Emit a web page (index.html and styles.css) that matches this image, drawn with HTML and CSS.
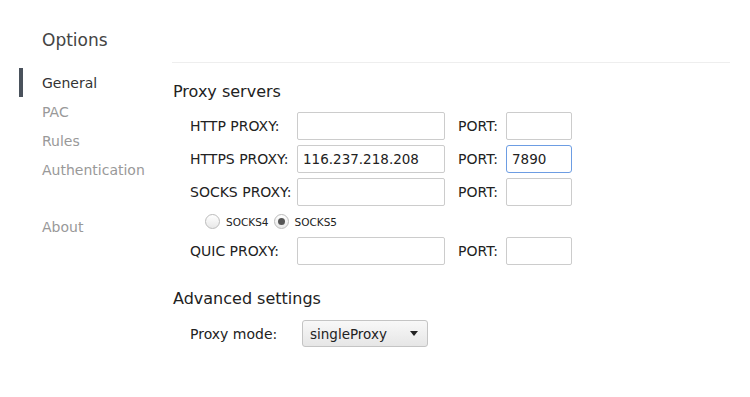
FILE: index.html
```html
<!DOCTYPE html>
<html lang="en">
<head>
  <meta charset="UTF-8" />
  <title>Options</title>
  <link rel="stylesheet" href="styles.css">
</head>
<body>
  <div class="sidebar">
    <h1 class="title">Options</h1>
    <ul class="nav">
      <li class="active">General</li>
      <li>PAC</li>
      <li>Rules</li>
      <li>Authentication</li>
      <li class="about">About</li>
    </ul>
  </div>

  <div class="main">
    <div class="header"></div>

    <h2 class="section-title">Proxy servers</h2>
    <div class="proxy-grid">
      <label>HTTP PROXY:</label>
      <input type="text" class="host">
      <label>PORT:</label>
      <input type="text" class="port">

      <label>HTTPS PROXY:</label>
      <input type="text" class="host" value="116.237.218.208">
      <label>PORT:</label>
      <input type="text" class="port focused" value="7890">

      <label>SOCKS PROXY:</label>
      <input type="text" class="host">
      <label>PORT:</label>
      <input type="text" class="port">

      <div class="socks-type">
        <span class="radio"></span><span class="radio-label">socks4</span>
        <span class="radio checked"></span><span class="radio-label">socks5</span>
      </div>

      <label>QUIC PROXY:</label>
      <input type="text" class="host">
      <label>PORT:</label>
      <input type="text" class="port">
    </div>

    <h2 class="section-title advanced">Advanced settings</h2>
    <div class="mode-row">
      <label>Proxy mode:</label>
      <div class="select">
        <span>singleProxy</span>
        <span class="arrow"></span>
      </div>
    </div>
  </div>
</body>
</html>
```

FILE: styles.css
```css
html, body {
  margin: 0;
  padding: 0;
  background-color: white;
  color: #222;
  font-family: "DejaVu Sans", sans-serif;
}

body {
  display: flex;
}

.sidebar {
  width: 172px;
  flex: 0 0 auto;
}

.title {
  margin: 28px 0 0 42px;
  font-size: 17px;
  font-weight: normal;
  color: #444;
  line-height: 24px;
}

.nav {
  list-style: none;
  margin: 16px 0 0 0;
  padding: 0;
}

.nav li {
  margin-left: 19px;
  padding-left: 19px;
  border-left: 4px solid transparent;
  height: 29px;
  line-height: 30px;
  font-size: 14px;
  color: #999;
}

.nav li.active {
  border-left-color: #4a525c;
  color: #333;
}

.nav li.about {
  margin-top: 28px;
}

.main {
  flex: 1;
  margin-right: 20px;
}

.header {
  height: 62px;
  border-bottom: 1px solid #eee;
}

.section-title {
  margin: 17px 0 0 1px;
  font-size: 16px;
  font-weight: normal;
  color: #222;
  line-height: 24px;
}

.proxy-grid {
  display: grid;
  grid-template-columns: 107px 148px 61px 66px;
  row-gap: 5px;
  align-items: center;
  margin: 8px 0 0 18px;
}

.proxy-grid label {
  font-size: 14px;
  color: #222;
}

.proxy-grid label:nth-of-type(even) {
  padding-left: 13px;
}

input {
  box-sizing: border-box;
  height: 28px;
  padding: 0 5px;
  border: 1px solid #ccc;
  border-radius: 2px;
  font-family: "DejaVu Sans", sans-serif;
  font-size: 13.5px;
  color: #222;
  outline: none;
}

input.host {
  width: 148px;
}

input.port {
  width: 66px;
}

input.focused {
  border-color: #6d9de3;
  border-radius: 3px;
}

.socks-type {
  grid-column: 1 / -1;
  display: flex;
  align-items: center;
  height: 21px;
  padding-left: 15px;
}

.radio {
  box-sizing: border-box;
  width: 15px;
  height: 15px;
  border-radius: 50%;
  border: 1px solid #bbb;
  background: linear-gradient(#fff, #e8e8e8);
  margin-right: 6px;
  position: relative;
}

.radio.checked::after {
  content: "";
  position: absolute;
  left: 3px;
  top: 3px;
  width: 7px;
  height: 7px;
  border-radius: 50%;
  background-color: #555;
}

.radio-label {
  font-size: 10.5px;
  text-transform: uppercase;
  margin-right: 5px;
}

.advanced {
  margin-top: 22px;
}

.mode-row {
  display: flex;
  align-items: center;
  margin: 9px 0 0 18px;
  font-size: 14px;
}

.mode-row label {
  width: 112px;
}

.select {
  box-sizing: border-box;
  width: 126px;
  height: 27px;
  border: 1px solid #c4c4c4;
  border-radius: 3px;
  background: linear-gradient(#f8f8f8, #e6e6e6);
  display: flex;
  align-items: center;
  justify-content: space-between;
  padding: 0 9px 0 7px;
  font-size: 13.5px;
}

.arrow {
  width: 0;
  height: 0;
  border-left: 4px solid transparent;
  border-right: 4px solid transparent;
  border-top: 5px solid #222;
}
```
